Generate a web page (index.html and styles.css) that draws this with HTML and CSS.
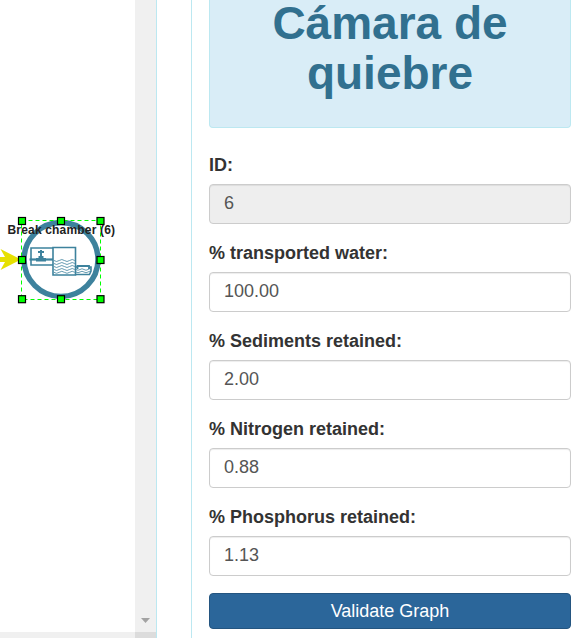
FILE: index.html
```html
<!DOCTYPE html>
<html lang="es">
<head>
<meta charset="utf-8">
<title>Cámara de quiebre</title>
<link rel="stylesheet" href="styles.css">
</head>
<body>
<div class="workspace">
  <section class="graph">
    <div class="graph-row">
      <div class="canvas">
        <svg class="diagram" width="135" height="110" viewBox="0 205 135 110">
          <path d="M0 257H5L.5 249 21 259.5.5 270 5 262H0z" fill="#e6e000"/>
          <circle cx="61" cy="259.5" r="37" fill="#fff" stroke="#3d829d" stroke-width="5.5"/>
          <g fill="none" stroke="#3d829d">
            <path d="M53 248H31V265H53" stroke-width="1.6"/>
            <path d="M29.5 259.5H53" stroke-width="2.2"/>
            <path d="M53 247.5H75.5V275H53z" stroke-width="1.6"/>
            <path d="M75 267H77M89 267H91V271L89.500 274.500H75" stroke-width="1.6"/>
            <path d="M77.500 269V266H89V269" stroke-width="1.800"/>
            <path d="M54 260.5q2.6 2 5.2 0t5.2 0 5.2 0 5.2 0M54 263.500q2.6 2 5.2 0t5.2 0 5.2 0 5.2 0M54 266.500q2.6 2 5.2 0t5.2 0 5.2 0 5.2 0M54 269.500q2.6 2 5.2 0t5.2 0 5.2 0 5.2 0M54 272.300q2.6 2 5.2 0t5.2 0 5.2 0 5.2 0M76 269.500q2 1.5 4 0t4 0 4 0 3 0M76 272q2 1.5 4 0t4 0 4 0 2 0" stroke-width=".8"/>
          </g>
          <path d="M38 251H40V250H42V251H44V253H42V256H43.5V258H46V261.5H36V258H38.5V256H40V253H38z" fill="#3d829d"/>
          <text class="node-label" x="7.5" y="234" textLength="107.5">Break chamber (6)</text>
          <rect x="21.5" y="220.5" width="79" height="79" fill="none" stroke="#00ff00" stroke-dasharray="4 3"/>
          <g class="handles">
            <rect x="18.5" y="217.5" width="7" height="7"/><rect x="57.5" y="217.5" width="7" height="7"/><rect x="97" y="217.5" width="7" height="7"/>
            <rect x="18.5" y="256.5" width="7" height="7"/><rect x="97" y="256.5" width="7" height="7"/>
            <rect x="18.5" y="295.7" width="7" height="7"/><rect x="57.5" y="295.7" width="7" height="7"/><rect x="97" y="295.7" width="7" height="7"/>
          </g>
        </svg>
      </div>
      <div class="scrollbar"><svg width="9" height="5" viewBox="0 0 9 5"><path d="M0 0H9L4.5 5z" fill="#a3a3a3"/></svg></div>
    </div>
    <div class="graph-foot"><div class="corner"></div></div>
  </section>
  <aside class="sidebar">
    <div class="panel"><h1>Cámara de quiebre</h1></div>
    <form class="fields">
      <label for="id">ID:</label>
      <input id="id" value="6" readonly>
      <label for="water">% transported water:</label>
      <input id="water" value="100.00">
      <label for="sediments">% Sediments retained:</label>
      <input id="sediments" value="2.00">
      <label for="nitrogen">% Nitrogen retained:</label>
      <input id="nitrogen" value="0.88">
      <label for="phosphorus">% Phosphorus retained:</label>
      <input id="phosphorus" value="1.13">
      <button type="button">Validate Graph</button>
    </form>
  </aside>
</div>
</body>
</html>
```
FILE: styles.css
```css
* { box-sizing: border-box; }
body {
  margin: 0;
  background: #fff;
  color: #333;
  font: 18px/26px "Liberation Sans", Arial, sans-serif;
}
.workspace { display: flex; height: 638px; overflow: hidden; }
.graph {
  display: flex;
  flex-direction: column;
  width: 157px;
  border-right: 1px solid #bce8f1;
}
.graph-row { display: flex; height: 632px; }
.canvas { width: 135px; padding-top: 205px; }
.diagram { display: block; }
.node-label { font-size: 12px; fill: #222; font-weight: bold; }
.handles { fill: #00ff00; stroke: #000; stroke-width: 1.2; }
.scrollbar {
  display: flex;
  justify-content: center;
  align-items: flex-end;
  width: 21px;
  padding-bottom: 9px;
  background: #f0f0f0;
}
.graph-foot { display: flex; justify-content: flex-end; height: 6px; background: #f0f0f0; }
.corner { width: 21px; background: #dcdcdc; }
.sidebar {
  width: 392px;
  margin-left: 34px;
  padding: 0 12px 0 17px;
  border-left: 1px solid #bce8f1;
}
.panel {
  display: flow-root;
  height: 128px;
  border: 1px solid #bce8f1;
  border-top: 0;
  border-radius: 0 0 4px 4px;
  background: #d9edf7;
  text-align: center;
}
h1 {
  margin: -2px 0 0;
  color: #31708f;
  font-size: 46px;
  line-height: 50px;
}
.fields { display: flex; flex-direction: column; padding-top: 24px; }
label { height: 32px; font-weight: bold; }
input {
  width: 100%;
  height: 40px;
  margin-bottom: 16px;
  padding: 0 14px 2px;
  border: 1px solid #ccc;
  border-radius: 4px;
  background: #fff;
  box-shadow: inset 0 1px 1px rgba(0, 0, 0, .075);
  color: #555;
  font: inherit;
}
input[readonly] { background: #eee; }
button {
  height: 36px;
  margin-top: 1px;
  padding: 0;
  border: 1px solid #245580;
  border-radius: 4px;
  background: #2b669a;
  color: #fff;
  font: inherit;
}
```
